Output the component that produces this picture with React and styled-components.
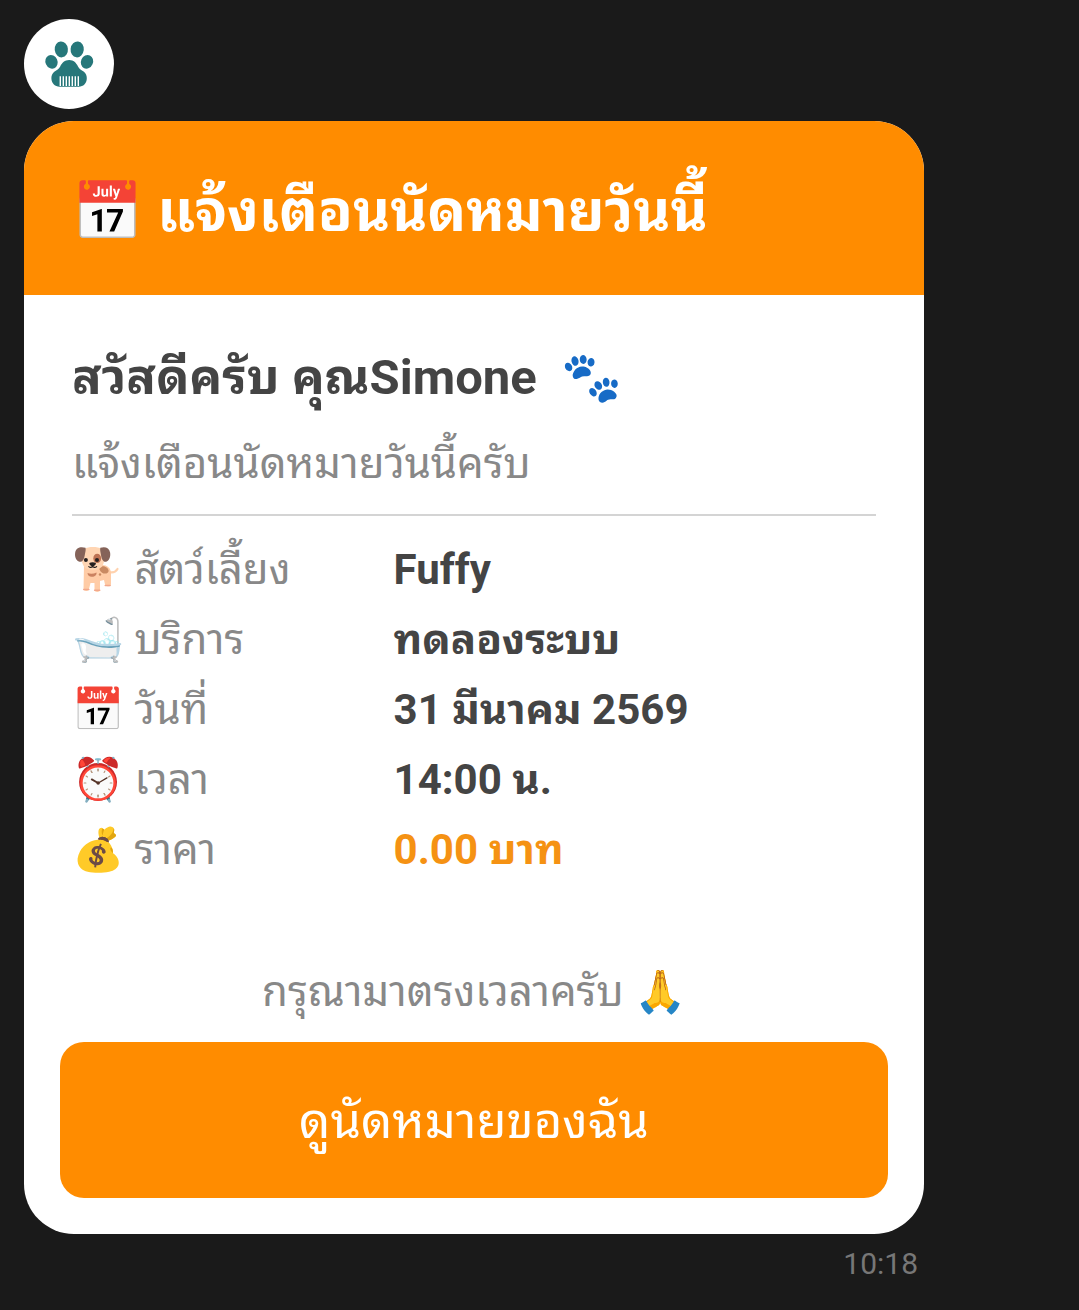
import React from 'react'
import styled, { createGlobalStyle } from 'styled-components';

const GlobalStyle = createGlobalStyle`
    body {
        margin: 0;
        background: #1a1a1a;
        font-family: Roboto, "Noto Sans Thai Looped", "Noto Sans", sans-serif;
    }
`;

const Chat = styled.main`
    box-sizing: border-box;
    max-width: 948px;
    padding: 19px 24px;
`;

const Avatar = styled.div`
    display: flex;
    align-items: center;
    justify-content: center;
    width: 90px;
    height: 90px;
    margin-bottom: 12px;
    border-radius: 50%;
    background: #fff;
`;

const Card = styled.article`
    overflow: hidden;
    border-radius: 50px;
    background: #fff;
`;

const CardHeader = styled.header`
    padding: 52px 48px 44px;
    background: #ff8c00;
`;

const Title = styled.h1`
    margin: 0;
    font-size: 57px;
    line-height: 78px;
    font-weight: 700;
    color: #fff;
`;

const CardBody = styled.section`
    padding: 48px;
`;

const Greeting = styled.h2`
    margin: 0;
    font-size: 49px;
    line-height: 70px;
    font-weight: 700;
    color: #444;
    white-space: pre-wrap;
`;

const Text = styled.p`
    margin: ${(props) => props.$margin || '0px'};
    font-size: 42px;
    line-height: 70px;
    color: #888;
    text-align: ${(props) => props.$align || 'start'};
`;

const Divider = styled.hr`
    margin: 15px 0 19px;
    border: 0;
    border-top: 2px solid #d4d4d4;
`;

const InfoList = styled.dl`
    margin: 0;
`;

const InfoRow = styled.div`
    display: grid;
    grid-template-columns: 2fr 3fr;
    font-size: 42px;
    line-height: 70px;
`;

const InfoLabel = styled.dt`
    color: #888;
    white-space: nowrap;
`;

const InfoValue = styled.dd`
    margin: 0;
    font-weight: 700;
    color: ${(props) => props.$color || '#444'};
`;

const CardFooter = styled.footer`
    padding: 24px 36px 36px;
`;

const Button = styled.button`
    display: block;
    width: 100%;
    padding: 44px 42px 40px;
    border: 0;
    border-radius: 24px;
    background: #ff8c00;
    color: #fff;
    font-family: inherit;
    font-size: 49px;
    line-height: 72px;
    cursor: pointer;
`;

const Time = styled.time`
    display: block;
    padding: 12px 6px;
    font-size: 30px;
    line-height: 36px;
    color: #777;
    text-align: right;
`;

const DogSvg = styled.svg`
    width: 52px;
    height: 48px;
    vertical-align: text-bottom;
`;

// paw with a comb cut out of the pad
const PawLogo = () => (
    <svg width="58" height="56" viewBox="0 0 58 56" fill="#26777a" aria-hidden="true">
        <ellipse cx="21.3" cy="13.4" rx="6.6" ry="8" transform="rotate(-6 21.3 13.4)" />
        <ellipse cx="37.2" cy="13.4" rx="6.6" ry="8" transform="rotate(6 37.2 13.4)" />
        <ellipse cx="11.5" cy="25.8" rx="6" ry="7" transform="rotate(-24 11.5 25.8)" />
        <ellipse cx="47" cy="25.8" rx="6" ry="7" transform="rotate(24 47 25.8)" />
        <path d="M29.2 24c4.4 0 7 2.800 8.800 6.400 1.400 2.700 3.400 3.400 5.600 5.200 2.400 2 3.400 4.400 3.200 7.200-.3 4.700-3.400 7.900-8 7.900H19.600c-4.600 0-7.900-3.200-8.200-7.900-.2-2.800.8-5.200 3.200-7.200 2.200-1.800 4.200-2.500 5.600-5.200 1.800-3.600 4.600-6.400 9-6.400z" />
        <path d="M20.3 40.3v9.7M23.3 40.3v9.7M26.3 40.3v9.7M29.3 40.3v9.7M32.3 40.3v9.7M35.3 40.3v9.7M38.3 40.3v9.7" stroke="#fff" strokeWidth="1.4" />
    </svg>
)

const Dog = () => (
    <DogSvg viewBox="3 7 52 48" aria-hidden="true">
        <path d="M40 33c4 1 7-.5 8.5-3" fill="none" stroke="#ffd2ae" strokeWidth="2.2" strokeLinecap="round" />
        <path d="M15 26h18c5 0 9 3 9 8v11c0 3-5 3-6 .5L35 41l-4 1v9c0 2.500-5.500 2.500-5.500 0v-7h-4L20 50c0 2.500-5.500 2.500-5.500 0z" fill="#ffcca6" />
        <path d="M14.800 50.500h5M25.700 51.300h5M36.300 46.500h4.800" stroke="#f2a88c" strokeWidth="1.6" strokeLinecap="round" />
        <path d="M31 28c3-2 8 0 8.600 3.500.5 3-4 4-6.600 2.200-2-1.400-3.600-4.400-2-5.700z" fill="#c98a62" />
        <path d="M18.500 34c2.500 1 6 1 9-.5.5 2.500-2 4.500-4.700 4.300-2.500-.1-4.300-1.600-4.300-3.800z" fill="#cb8260" />
        <circle cx="31" cy="35.5" r="1.2" fill="#c98a62" />
        <path d="M15 10c5-2.600 13-2.600 18 0 1.600 5 3 10 1.500 14.500C33 29.500 28 31 24 31s-9-1.500-10.500-6.500C12 20 13.400 15 15 10z" fill="#ffd5b3" />
        <ellipse cx="28.2" cy="19.4" rx="3.9" ry="4.7" fill="#bd7253" />
        <path d="M16.500 8.800c-5-1.700-9.500 0-10.300 4.700-.7 4 .8 8.300 4.300 9.200 3.200.7 4.700-3 5.200-6.200.4-2.700 1.400-5 .8-7.700zM31.300 8.800c4.700-1.700 9 0 9.800 4.700.7 4-.8 8.300-4 9.200-3 .7-4.600-3-5-6.200-.4-2.700-1.300-5-.8-7.700z" fill="#856359" />
        <circle cx="16.9" cy="21" r="2" fill="#252020" />
        <circle cx="28" cy="21" r="2" fill="#252020" />
        <path d="M20.3 24c1.800-.9 4.800-.9 6.600 0 .3 1.800-1.700 3.200-3.300 3.200s-3.600-1.400-3.300-3.200z" fill="#252020" />
        <path d="M19.8 27.600c1.400 1.300 3 1 3.800-.5.8 1.500 2.600 1.800 4 .5" fill="none" stroke="#252020" strokeWidth="1.2" strokeLinecap="round" />
    </DogSvg>
)

const rows = [
    { icon: <Dog />, label: 'สัตว์เลี้ยง', value: 'Fuffy' },
    { icon: '🛁', label: 'บริการ', value: 'ทดลองระบบ' },
    { icon: '📅', label: 'วันที่', value: '31 มีนาคม 2569' },
    { icon: '⏰', label: 'เวลา', value: '14:00 น.' },
    { icon: '💰', label: 'ราคา', value: '0.00 บาท', color: '#f59213' },
];

const App = () => {
    return (
        <>
            <GlobalStyle />
            <Chat>
                <Avatar><PawLogo /></Avatar>
                <Card>
                    <CardHeader>
                        <Title>📅 แจ้งเตือนนัดหมายวันนี้</Title>
                    </CardHeader>
                    <CardBody>
                        <Greeting>{'สวัสดีครับ คุณSimone  🐾'}</Greeting>
                        <Text $margin='16px 0 0'>แจ้งเตือนนัดหมายวันนี้ครับ</Text>
                        <Divider />
                        <InfoList>
                            {rows.map((row) => (
                                <InfoRow key={row.label}>
                                    <InfoLabel>{row.icon} {row.label}</InfoLabel>
                                    <InfoValue $color={row.color}>{row.value}</InfoValue>
                                </InfoRow>
                            ))}
                        </InfoList>
                    </CardBody>
                    <CardFooter>
                        <Text $align='center' $margin='0 0 15px'>กรุณามาตรงเวลาครับ 🙏</Text>
                        <Button type='button'>ดูนัดหมายของฉัน</Button>
                    </CardFooter>
                </Card>
                <Time>10:18</Time>
            </Chat>
        </>
    )
}

export default App;
